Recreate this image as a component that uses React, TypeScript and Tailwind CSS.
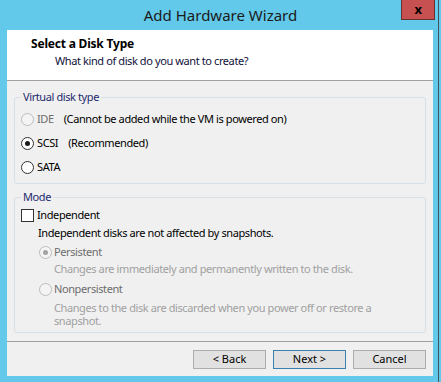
import React from 'react';

const font = { fontFamily: '"Noto Sans", "Open Sans", sans-serif' };

const Radio: React.FC<{ checked?: boolean; disabled?: boolean }> = ({ checked, disabled }) => (
  <span
    className={`flex h-[13px] w-[13px] shrink-0 items-center justify-center rounded-full border ${
      disabled ? 'border-[#bcbcbc] bg-[#f4f4f4]' : 'border-[#333333] bg-white'
    }`}
  >
    {checked && (
      <span className={`h-[5px] w-[5px] rounded-full ${disabled ? 'bg-[#a3a3a3]' : 'bg-[#1a1a1a]'}`} />
    )}
  </span>
);

const GroupBox: React.FC<{ title: string; className?: string; children: React.ReactNode }> = ({
  title,
  className,
  children,
}) => (
  <div className={`relative mx-[7px] rounded-[3px] border border-[#d5dfe5] ${className ?? ''}`}>
    <span className="absolute -top-[8px] left-[6px] bg-[#f0f0f0] px-[2px] leading-[14px] text-[#1c2a6e]">
      {title}
    </span>
    {children}
  </div>
);

const Button: React.FC<{ label: string; primary?: boolean }> = ({ label, primary }) => (
  <button
    className={`flex h-[19px] w-[73px] items-center justify-center border bg-[#e1e1e1] text-[11px] text-black ${
      primary ? 'border-[#3c7fb1]' : 'border-[#adadad]'
    }`}
  >
    {label}
  </button>
);

export default function App() {
  return (
    <div
      className="relative flex h-[382px] w-[441px] flex-col bg-[#62c9ea] text-[11px] tracking-[-0.4px] text-black"
      style={font}
    >
      {/* title bar */}
      <div className="relative flex h-[30px] items-center justify-center">
        <span className="text-[15px] leading-none tracking-normal text-[#1b1b1b]">Add Hardware Wizard</span>
        <div className="absolute right-[6px] top-0 flex h-[20px] w-[34px] items-center justify-center border border-t-0 border-[#6a3030] bg-[#c75050]">
          <span className="text-[13px] font-bold leading-none text-black">x</span>
        </div>
      </div>
      <div className="absolute right-[2px] top-0 h-full w-px bg-[#3c5660]" />

      {/* client */}
      <div className="ml-[7px] flex h-[346px] w-[426px] flex-col bg-[#f0f0f0]">
        <div className="h-[51px] border-b border-[#a0a0a0] bg-white">
          <div className="ml-[24px] mt-[6px] text-[12px] font-bold leading-[16px] tracking-[-0.2px]">
            Select a Disk Type
          </div>
          <div className="ml-[48px] mt-[1px] leading-[16px] text-[#10103a]">What kind of disk do you want to create?</div>
        </div>

        <GroupBox title="Virtual disk type" className="mt-[16px] h-[87px] pt-[9px]">
          <div className="flex h-[24px] items-center pl-[6px]">
            <Radio disabled />
            <span className="ml-[3px] text-[#6d6d6d]">IDE</span>
            <span className="ml-[10px]">(Cannot be added while the VM is powered on)</span>
          </div>
          <div className="flex h-[24px] items-center pl-[6px]">
            <Radio checked />
            <span className="ml-[3px]">SCSI</span>
            <span className="ml-[10px]">(Recommended)</span>
          </div>
          <div className="flex h-[24px] items-center pl-[6px]">
            <Radio />
            <span className="ml-[3px]">SATA</span>
          </div>
        </GroupBox>

        <GroupBox title="Mode" className="mt-[13px] h-[136px] pt-[7px]">
          <div className="flex h-[20px] items-center pl-[6px]">
            <span className="h-[13px] w-[13px] border border-[#333333] bg-white" />
            <span className="ml-[3px]">Independent</span>
          </div>
          <div className="pl-[23px] leading-[16px]">Independent disks are not affected by snapshots.</div>
          <div className="mt-[2px] flex h-[18px] items-center pl-[24px]">
            <Radio checked disabled />
            <span className="ml-[2px] text-[#6d6d6d]">Persistent</span>
          </div>
          <div className="pl-[39px] leading-[16px] text-[#a0a0a0]">
            Changes are immediately and permanently written to the disk.
          </div>
          <div className="mt-[3px] flex h-[18px] items-center pl-[24px]">
            <Radio disabled />
            <span className="ml-[2px] text-[#6d6d6d]">Nonpersistent</span>
          </div>
          <div className="mt-[3px] w-[374px] pl-[39px] leading-[13px] text-[#a0a0a0]">
            Changes to the disk are discarded when you power off or restore a snapshot.
          </div>
        </GroupBox>

        <div className="mt-[8px] border-t border-[#a0a0a0]" />
        <div className="mt-[8px] flex justify-end gap-[7px] pr-[7px] tracking-normal">
          <Button label="< Back" />
          <Button label="Next >" primary />
          <Button label="Cancel" />
        </div>
      </div>
    </div>
  );
}
